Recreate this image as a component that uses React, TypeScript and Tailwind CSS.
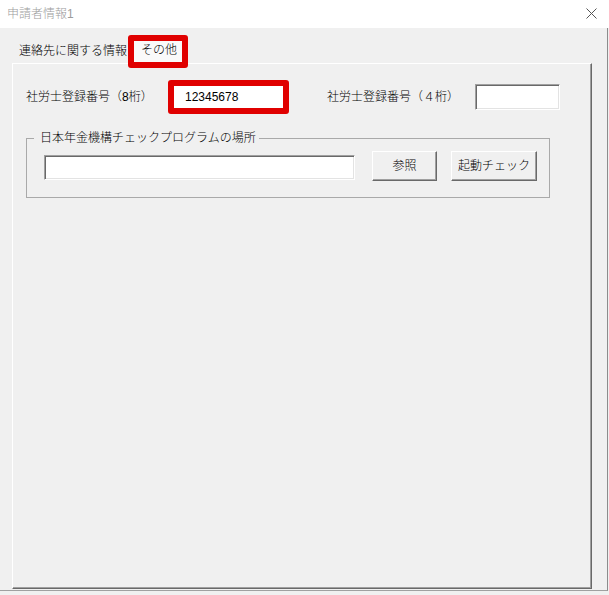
import React from "react";

const sunken =
  "bg-white border-t border-l border-t-[#a0a0a0] border-l-[#a0a0a0] border-b border-r border-b-[#ffffff] border-r-[#ffffff] shadow-[inset_1px_1px_0_#696969,inset_-1px_-1px_0_#e3e3e3]";

const raised =
  "bg-[#f0f0f0] border-t border-l border-t-white border-l-white border-b border-r border-b-[#696969] border-r-[#696969] shadow-[inset_-1px_-1px_0_#a0a0a0] flex items-center justify-center text-[12px] leading-none text-black font-light";

export default function App() {
  return (
    <div className="w-[609px] h-[595px] bg-[#f0f0f0] overflow-hidden font-['Liberation_Sans','Noto_Sans_CJK_JP',sans-serif] font-light text-[12px] text-black">
      {/* title bar */}
      <div className="h-[28px] bg-white flex items-center justify-between pl-[7px] pr-[12px]">
        <span className="text-[12px] leading-[17px] text-[#9c9c9c]">申請者情報1</span>
        <svg width="11" height="11" viewBox="0 0 11 11" className="mt-[-1px]">
          <path d="M0.5 0.5 L10.5 10.5 M10.5 0.5 L0.5 10.5" stroke="#555" strokeWidth="1" fill="none" />
        </svg>
      </div>

      {/* window body */}
      <div className="h-[563px] w-[608px] border-r border-b border-r-[#8c8c8c] border-b-[#a0a0a0]">
        {/* tab row */}
        <div className="h-[35px] flex items-start pl-[19px]">
          <span className="mt-[15px] leading-[17px] whitespace-nowrap">連絡先に関する情報</span>
          <div className="relative z-10 ml-px mt-[7px] h-[33px] w-[60px] border-[6px] border-[#e00000] rounded-[3px] bg-[#fafafa] flex items-center pl-[7px]">
            <span className="leading-[17px] mt-[-2px] whitespace-nowrap">その他</span>
          </div>
        </div>

        {/* tab panel */}
        <div className="ml-[12px] w-[580px] h-[526px] border-t border-l border-t-white border-l-white border-r border-b border-r-[#696969] border-b-[#696969] shadow-[inset_-1px_-1px_0_#a0a0a0]">
          {/* row 1 */}
          <div className="flex items-center pl-[13px] pt-[16px]">
            <div className="w-[142px] leading-[17px] whitespace-nowrap">社労士登録番号（8桁）</div>
            <div className="h-[34px] w-[121px] border-[6px] border-[#e00000] rounded-[3px] bg-white flex items-center pl-[11px]">
              <span className="text-[12px] leading-[17px] font-normal">12345678</span>
            </div>
            <div className="ml-[38px] w-[148px] leading-[17px] whitespace-nowrap">社労士登録番号（４桁）</div>
            <div className={`h-[26px] w-[85px] ${sunken}`} />
          </div>

          {/* group box */}
          <fieldset className="ml-[13px] mt-[16px] w-[524px] border border-[#a9a9a9] pb-[16px] pt-0">
            <legend className="ml-[7px] px-[6px] pr-[3px] leading-[17px] whitespace-nowrap">
              日本年金機構チェックプログラムの場所
            </legend>
            <div className="flex items-start pl-[17px] mt-[4px]">
              <div className={`mt-[4px] h-[25px] w-[311px] ${sunken}`} />
              <button className={`ml-[17px] h-[30px] w-[65px] ${raised}`}>参照</button>
              <button className={`ml-[14px] h-[30px] w-[86px] ${raised}`}>起動チェック</button>
            </div>
          </fieldset>
        </div>
      </div>
    </div>
  );
}
